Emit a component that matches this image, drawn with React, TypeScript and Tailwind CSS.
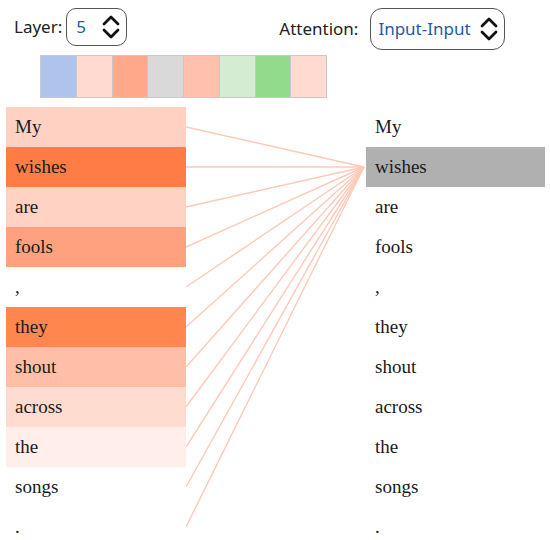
import React from 'react';

const swatches = ['#aec4ec', '#ffdad0', '#ffa98a', '#d9d9d9', '#ffc0ae', '#d4ecd2', '#92da8c', '#ffdad0'];

const tokens = [
  { word: 'My', bg: '#ffd1c3' },
  { word: 'wishes', bg: '#ff7d45' },
  { word: 'are', bg: '#ffd2c4' },
  { word: 'fools', bg: '#ffa17e' },
  { word: ',', bg: '' },
  { word: 'they', bg: '#ff874e' },
  { word: 'shout', bg: '#ffbea7' },
  { word: 'across', bg: '#ffdbd0' },
  { word: 'the', bg: '#ffeee9' },
  { word: 'songs', bg: '' },
  { word: '.', bg: '' },
];

function Spinner() {
  return (
    <svg width="20" height="28" viewBox="0 0 20 28" fill="none" stroke="#111" strokeWidth="2.8" strokeLinecap="round" strokeLinejoin="round">
      <path d="M3 11 L10 4 L17 11" />
      <path d="M3 17 L10 24 L17 17" />
    </svg>
  );
}

export default function App() {
  const rowH = 40;
  const target = rowH * 1 + rowH / 2;

  return (
    <div className="w-[550px] h-[540px] bg-white overflow-hidden relative" style={{ fontFamily: '"Noto Sans", "Open Sans", sans-serif' }}>
      {/* Controls */}
      <div className="flex items-start h-[55px]">
        <div className="flex items-center pl-[14px] pt-[8px]">
          <span className="text-[17px] text-[#222] mr-[4px]">Layer:</span>
          <div className="w-[61px] h-[38px] border border-[#555] rounded-[10px] flex items-center justify-between pl-[9px] pr-[5px]">
            <span className="text-[17px] text-[#1f5aa6]">5</span>
            <Spinner />
          </div>
        </div>
        <div className="flex items-center ml-[152px] pt-[8px]">
          <span className="text-[17px] text-[#222] mr-[12px]">Attention:</span>
          <div className="w-[135px] h-[42px] border border-[#555] rounded-[12px] flex items-center justify-between pl-[7px] pr-[5px]">
            <span className="text-[17px] text-[#1f5aa6]">Input-Input</span>
            <Spinner />
          </div>
        </div>
      </div>

      {/* Color strip */}
      <div className="flex ml-[40px] h-[43px] w-[287px] border border-[#c8c8c8]">
        {swatches.map((c, i) => (
          <div key={i} className={`flex-1 h-full ${i > 0 ? 'border-l border-[#c8c8c8]' : ''}`} style={{ backgroundColor: c }} />
        ))}
      </div>

      {/* Attention view */}
      <div className="flex mt-[9px]" style={{ fontFamily: '"Liberation Serif", "Times New Roman", serif' }}>
        <div className="ml-[6px] w-[180px] flex flex-col">
          {tokens.map((t, i) => (
            <div key={i} className="h-[40px] flex items-center pl-[9px] text-[19px] text-[#1a1a1a]" style={{ backgroundColor: t.bg || 'transparent' }}>
              {t.word}
            </div>
          ))}
        </div>
        <svg width="180" height={rowH * tokens.length} className="shrink-0">
          {tokens.map((_, i) => (
            <line key={i} x1="0" y1={i * rowH + rowH / 2} x2="178" y2={target} stroke="#ffc9b9" strokeWidth="1.4" />
          ))}
        </svg>
        <div className="w-[179px] flex flex-col">
          {tokens.map((t, i) => (
            <div key={i} className={`h-[40px] flex items-center pl-[9px] text-[19px] text-[#1a1a1a] ${i === 1 ? 'bg-[#b0b0b0]' : ''}`}>
              {t.word}
            </div>
          ))}
        </div>
      </div>
    </div>
  );
}
